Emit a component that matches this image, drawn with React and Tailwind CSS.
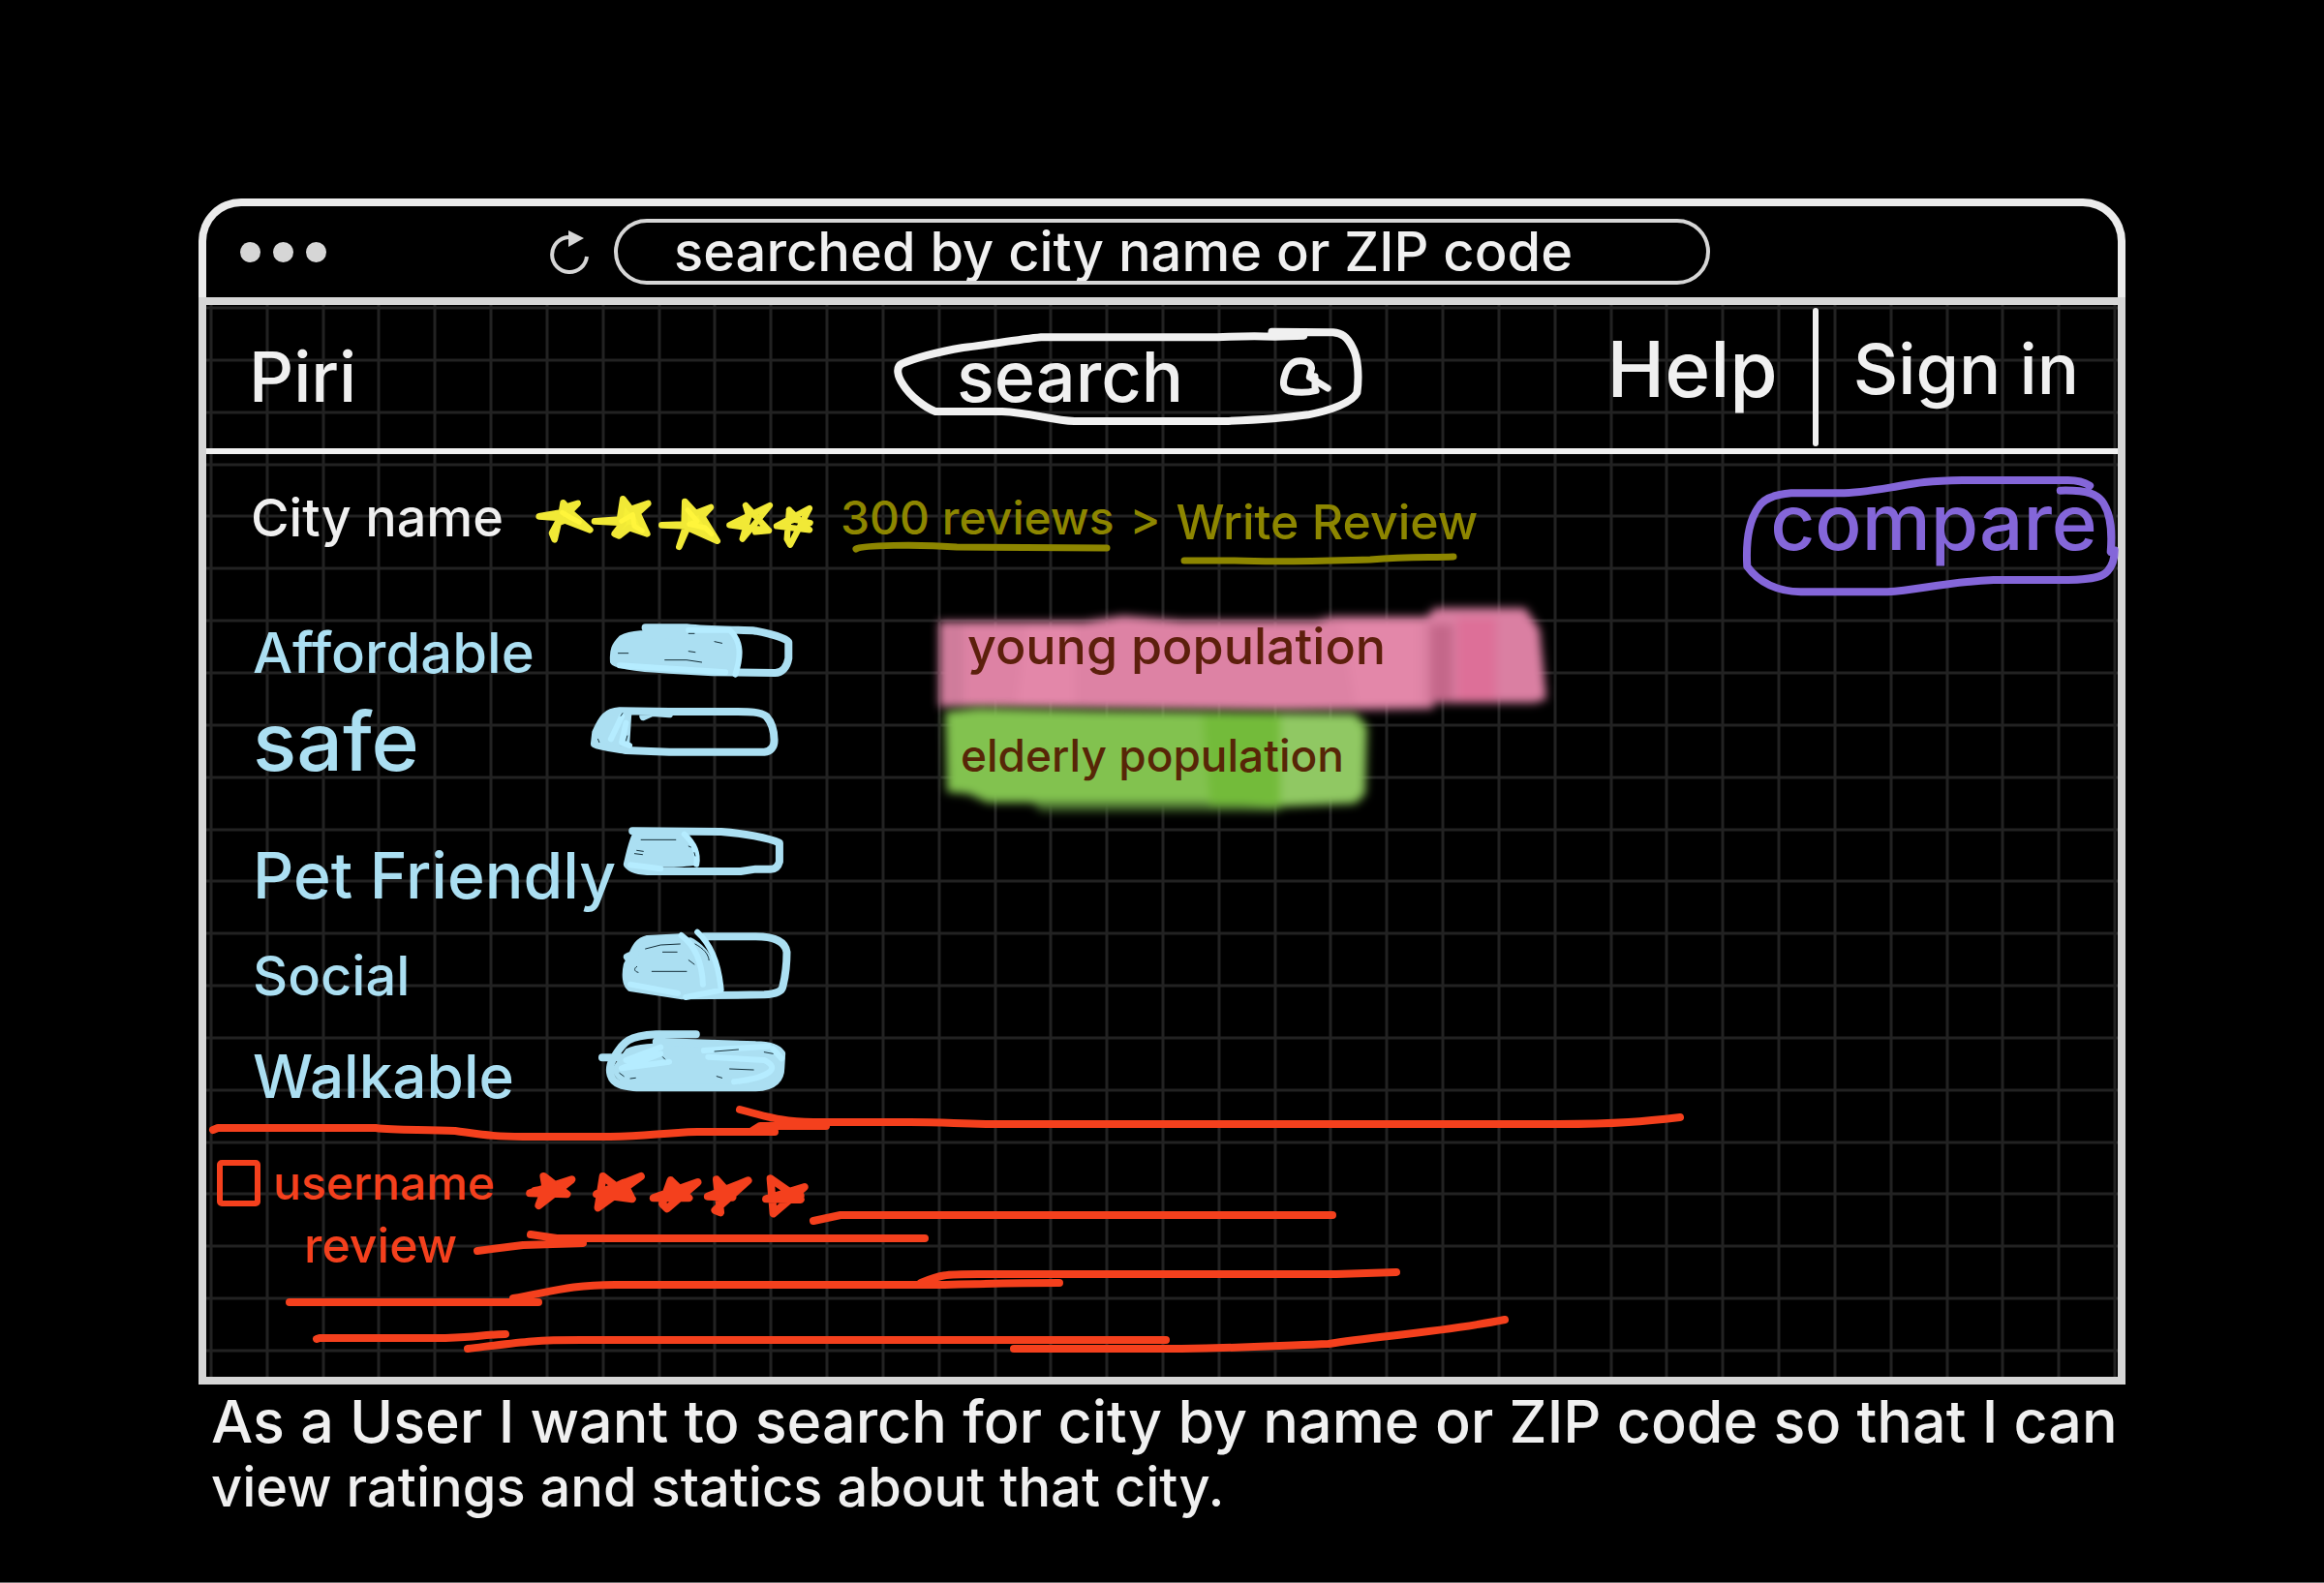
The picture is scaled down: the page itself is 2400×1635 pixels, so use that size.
const ICE = '#abdff2';
const ICE_LIGHT = '#b5ecff';
const RED = '#f4401d';

const columns = Array.from({ length: 35 }, (_, i) => 5 + Math.round((i * 1966) / 34));
const rows = Array.from({ length: 21 }, (_, i) => 3 + Math.round((i * 1077) / 20));

function Stroke({ d, color, width = 8, fill = 'none' }) {
  return (
    <path
      d={d}
      fill={fill}
      stroke={color}
      strokeWidth={width}
      strokeLinecap="round"
      strokeLinejoin="round"
      vectorEffect="non-scaling-stroke"
    />
  );
}

function GridLines() {
  return (
    <svg aria-hidden="true" viewBox="0 0 1974 1107" preserveAspectRatio="none" className="absolute inset-0 h-full w-full">
      {columns.map((x) => (
        <path key={x} d={`M${x} 0V1107`} stroke="#222222" strokeWidth="3" />
      ))}
      {rows.map((y) => (
        <path key={y} d={`M0 ${y}H1974`} stroke="#222222" strokeWidth="3" />
      ))}
    </svg>
  );
}

function TitleBar() {
  return (
    <header className="grid h-[102px] grid-cols-[354fr_67px_1132fr_421fr] items-center rounded-t-[44px] border-8 border-b-0 border-[#ebebeb]">
      <div className="flex gap-[13px] pl-[35px]">
        <span className="size-[21px] rounded-full bg-[#d6d6d6]" />
        <span className="size-[21px] rounded-full bg-[#d6d6d6]" />
        <span className="size-[21px] rounded-full bg-[#d6d6d6]" />
      </div>
      <button type="button" aria-label="Reload">
        <svg viewBox="567 236 45 48" className="h-12 w-[45px]">
          <path d="M587 245A18 18 0 1 0 606 265" fill="none" stroke="#d6d6d6" strokeWidth="4" />
          <path d="M587 238V255L603 246Z" fill="#d6d6d6" />
        </svg>
      </button>
      <input
        type="text"
        aria-label="Address"
        defaultValue="searched by city name or ZIP code"
        className="h-[68px] w-full rounded-full border-4 border-[#d6d6d6] pl-[58px] text-[56px] leading-[60px] font-medium text-[#f0f0f0]"
      />
    </header>
  );
}

function SiteHeader() {
  return (
    <div className="relative grid h-[148px] grid-cols-[663fr_490px_737fr] items-center pr-10 pl-11 text-[#f0f0f0]">
      <a href="#home" className="text-[72px] leading-20 font-medium">Piri</a>
      <form className="relative flex h-[110px] items-center pr-8 pl-[68px]">
        <svg aria-hidden="true" viewBox="70 435 853 330" preserveAspectRatio="none" className="absolute inset-0 h-full w-full">
          <Stroke
            color="#f0f0f0"
            d="M812 473L760 476C700 472 680 478 640 478L340 478C300 485 240 502 200 510C150 525 110 545 90 560C78 570 82 600 92 625C105 660 130 695 150 708L270 708C320 712 360 735 400 738L670 738C720 735 780 728 820 718C860 705 900 680 908 650C912 600 910 540 900 510C890 475 880 465 865 463L755 461"
          />
        </svg>
        <input
          type="text"
          aria-label="Search"
          placeholder="search"
          className="relative w-full min-w-0 flex-1 text-[72px] leading-20 font-medium placeholder:text-[#f0f0f0]"
        />
        <button type="submit" aria-label="Search" className="relative">
          <svg viewBox="760 525 105 135" preserveAspectRatio="none" className="h-[45px] w-[60px]">
            <Stroke
              color="#f0f0f0"
              width={7}
              d="M832 634C815 642 795 640 784 636C770 630 772 605 776 585C780 558 790 545 798 543C815 540 823 548 824 565L820 592M830 590L830 632M822 594L853 627"
            />
          </svg>
        </button>
      </form>
      <nav className="flex items-center justify-end gap-9 font-medium">
        <a href="#help" className="pb-4 text-[80px] leading-20">Help</a>
        <span className="h-[143px] w-[6px] rounded-full bg-[#f0f0f0]" />
        <a href="#sign-in" className="pb-4 text-[72px] leading-20">Sign in</a>
      </nav>
    </div>
  );
}

const cityStars = [
  'M50 130L120 118L125 88L135 100L170 90L145 115L208 172L130 142L110 150L98 202L90 182L115 135Z',
  'M222 145L300 140L310 76L335 108L388 90L355 120L385 184L330 165L298 190L284 184L310 150Z',
  'M430 157L500 155L502 84L535 120L582 102L555 130L602 206L510 165L484 224L505 160Z',
];

function CityStars() {
  return (
    <svg role="img" aria-label="Rating" viewBox="0 0 960 270" className="h-[90px] w-[320px] shrink-0">
      {cityStars.map((d) => (
        <path key={d} d={d} fill="#f6ef37" stroke="#f1e936" strokeWidth="20" strokeLinejoin="round" />
      ))}
      <g fill="none" stroke="#fff53b" strokeWidth="15" strokeLinecap="round" strokeLinejoin="round">
        <path d="M122 118L150 135L175 148M305 145L340 125L345 160L370 175M510 110L540 145L515 155L565 165L585 185" />
      </g>
      <g fill="none" stroke="#f1e936" strokeWidth="19" strokeLinecap="round" strokeLinejoin="round">
        <path d="M690 96L762 174L640 157L765 96L680 200L700 130L690 96M640 157L690 145M720 178L762 174" />
        <path d="M825 110L888 172L786 160L888 105L828 218L818 200L825 110M786 160L840 140L890 150" />
      </g>
    </svg>
  );
}

function CityRow() {
  return (
    <div className="flex h-[153px] items-start pl-[46px] font-medium">
      <div className="flex h-[132px] items-center">
        <h1 className="w-[281px] text-[54px] leading-[60px] whitespace-nowrap text-[#f0f0f0]">City name</h1>
        <CityStars />
        <div className="ml-2 flex items-center gap-4 text-[48px] leading-[60px] whitespace-nowrap text-[#8d8600]">
          <a href="#reviews" className="relative">
            300 reviews
            <svg aria-hidden="true" viewBox="0 0 280 12" className="absolute top-full left-0 h-3 w-[280px] overflow-visible">
              <Stroke color="#8d8600" width={7} d="M16 2C22 -2 80 -3 120 0L275 1" />
            </svg>
          </a>
          <span>&gt;</span>
          <a href="#write" className="relative pt-2 text-[50px]">
            Write Review
            <svg aria-hidden="true" viewBox="0 0 300 20" className="absolute top-full left-0 h-5 w-[300px] overflow-visible">
              <Stroke color="#8d8600" width={7} d="M8 10L60 10C110 12 160 10 200 9C240 6 260 7 286 6" />
            </svg>
          </a>
        </div>
      </div>
      <button
        type="button"
        className="relative mt-[21px] ml-auto h-[145px] w-[388px] pb-12 pl-2 text-center text-[80px] leading-20 text-[#8466d9]"
      >
        <svg aria-hidden="true" viewBox="490 900 956 435" preserveAspectRatio="none" className="absolute inset-0 h-full w-full overflow-visible">
          <Stroke
            color="#8466d9"
            d="M1375 935C1355 920 1340 918 1320 918L1050 918C950 920 920 930 870 940C810 952 770 958 740 958L615 958C570 962 540 980 530 1005C505 1050 500 1120 503 1185C530 1230 570 1262 640 1264L860 1264C940 1258 1000 1235 1130 1227L1320 1227C1390 1225 1410 1215 1420 1200C1435 1180 1438 1160 1438 1135L1428 1140C1432 1080 1430 1030 1410 990C1395 960 1370 948 1300 950"
          />
        </svg>
        compare
      </button>
    </div>
  );
}

const ratings = [
  {
    label: 'Affordable',
    value: 70,
    style: 'self-center text-[58px] leading-[60px]',
    box: '907 66 493 312',
    outline:
      'M1045 145L1140 145C1200 155 1270 150 1300 155C1340 165 1375 180 1376 190L1376 240C1372 270 1360 285 1345 285L1200 283L1100 275C1020 270 975 260 972 250C970 215 975 200 990 180C1010 165 1040 160 1125 170',
    fill: 'M985 180C1020 160 1080 152 1150 152L1240 152C1270 180 1272 240 1255 290L1100 277C1020 270 975 260 972 250Z',
    shade: 'M1145 152L1240 152C1270 190 1265 240 1253 290M985 262L1230 283',
    nicks: 'M982 224L1005 224M1090 245L1140 245L1175 252M1145 218L1160 221M1205 188L1222 193M1145 163L1158 163',
  },
  {
    label: 'safe',
    value: 20,
    style: 'self-start text-[84px] leading-20',
    box: '907 378 493 312',
    outline:
      'M1040 420L1060 408L1100 412M1100 405L985 403C955 405 945 425 930 470L927 505C940 515 980 520 1000 525L1100 530L1320 530C1335 528 1343 515 1343 495C1343 470 1338 440 1325 420C1310 405 1290 405 1240 405L1080 405',
    fill: 'M975 405L1013 410L1008 515L930 505C935 460 950 415 975 405Z',
    shade: 'M990 420L965 490M1000 440L990 500L1008 510',
    nicks: 'M935 490L938 500M992 410L988 418M1003 480L1000 495',
  },
  {
    label: 'Pet Friendly',
    value: 45,
    style: 'self-end text-[66px] leading-[60px]',
    box: '907 -30 493 312',
    outline:
      'M1015 55L1220 57C1270 62 1330 75 1355 92L1355 150C1352 165 1345 173 1335 173L1300 173L1265 180L1060 180C1030 180 1010 170 1003 158C1010 120 1012 100 1022 70',
    fill: 'M1025 65L1135 65C1155 90 1170 120 1165 160C1120 172 1040 168 1008 160Z',
    shade: 'M1135 65C1155 90 1168 120 1163 158M1010 160L1080 172',
    nicks: 'M1035 82L1115 82M1025 115L1040 118M1020 125L1038 128M1145 102L1150 105M1158 122L1160 132',
  },
  {
    label: 'Social',
    value: 55,
    style: 'self-end text-[56px] leading-[60px]',
    box: '907 282 493 312',
    outline:
      'M1003 445L1020 435M1125 385L1050 390C1020 400 1020 430 1003 470C998 500 1000 530 1010 540L1130 565L1320 562C1350 560 1360 550 1362 540C1368 510 1372 480 1372 430C1368 395 1340 382 1300 382L1180 382',
    fill: 'M1040 395L1150 385C1190 410 1215 470 1220 550L1135 572C1060 560 1015 548 1003 530C1000 480 1015 410 1040 395Z',
    shade: 'M1128 378C1150 400 1175 440 1178 530M1165 368C1200 410 1215 470 1220 548L1138 570M1010 530L1120 558',
    nicks: 'M1045 420L1080 408L1125 405M1085 430L1118 430M1060 490L1140 490M1025 475C1018 480 1018 490 1028 493M1160 405C1180 420 1190 435 1192 455M1145 455L1158 468',
  },
  {
    label: 'Walkable',
    value: 100,
    style: 'self-end text-[62px] leading-[60px]',
    box: '907 594 493 312',
    outline:
      'M1162 685L1070 685C1000 690 995 710 970 760C955 800 965 830 985 840C1000 850 1030 850 1060 850L1300 850C1345 848 1358 820 1358 790L1360 745C1350 725 1330 718 1300 718L1070 708M945 757L1000 757',
    fill: 'M1000 730C1030 710 1080 712 1150 712L1330 722L1358 750L1358 800C1350 840 1320 848 1290 850L1040 850C990 845 970 820 968 790Z',
    shade: 'M1080 725L1000 765L1080 745L990 790L1100 770M1180 735L1330 722M1190 755L1320 765C1360 790 1330 820 1250 832M1340 730L1360 760',
    nicks: 'M985 805L995 815M1010 822L1022 820M1085 755L1090 762M1240 792L1295 795M1205 738L1260 732M1320 740L1340 745M1210 815L1222 820',
  },
];

function RatingList() {
  return (
    <ul className="w-[710px] shrink-0 pl-11">
      {ratings.map((r) => (
        <li key={r.label} className="flex h-26">
          <span className={`w-[348px] shrink-0 pl-1 font-medium whitespace-nowrap text-[#abdff2] ${r.style}`}>{r.label}</span>
          <svg
            role="meter"
            aria-label={r.label}
            aria-valuenow={r.value}
            aria-valuemin={0}
            aria-valuemax={100}
            viewBox={r.box}
            preserveAspectRatio="none"
            className="h-26 w-[220px] shrink-0 overflow-visible"
          >
            <path d={r.fill} fill={ICE} />
            <Stroke color={ICE} d={r.outline} />
            <Stroke color={ICE_LIGHT} width={6} d={r.shade} />
            <Stroke color="#16303a" width={1} d={r.nicks} />
          </svg>
        </li>
      ))}
    </ul>
  );
}

function Populations() {
  return (
    <ul className="font-medium whitespace-nowrap">
      <li className="relative h-26 w-[640px] pt-4 pl-[37px] text-[52px] leading-[60px] text-[#5c1f0c]">
        <svg aria-hidden="true" viewBox="962 622 640 104" className="absolute inset-0 h-full w-full overflow-visible">
          <g className="blur-[5px]">
            <path d="M970 642H1120L1160 636L1220 641H1360L1375 637H1480V732L1330 734L970 730Z" fill="#dd82a4" />
            <path d="M975 645H995V728H975Z" fill="#cf7c9b" />
            <path d="M1060 645H1110V728H1050ZM1385 642H1465V728H1400Z" fill="#e387a9" />
            <path d="M1472 638L1482 628H1575L1590 650L1597 722L1585 726H1472Z" fill="#da7fa2" />
            <path d="M1477 645H1500V724H1477Z" fill="#c4678a" />
            <path d="M1505 638H1545V724H1505Z" fill="#dd6f98" />
          </g>
        </svg>
        <span className="relative">young population</span>
      </li>
      <li className="relative h-26 w-[640px] pt-6 pl-[30px] text-[46px] leading-[60px] text-[#572607]">
        <svg aria-hidden="true" viewBox="962 726 640 104" className="absolute inset-0 h-full w-full overflow-visible">
          <g className="blur-[5px]">
            <path d="M1062 826H1322V838H1075Z" fill="#456a2d" />
            <path d="M976 735L1010 731L1130 734L1400 737L1412 750L1410 820L1400 830L1310 834L1240 829H1020L1000 820L978 818Z" fill="#82c24f" />
            <path d="M1322 738H1398L1408 755V820L1395 828L1322 830Z" fill="#90c863" />
            <path d="M1242 738H1322V832H1250Z" fill="#73bb3a" />
          </g>
        </svg>
        <span className="relative">elderly population</span>
      </li>
    </ul>
  );
}

const reviewStars = [
  'M708 285L755 340L680 337L765 295L698 375L712 320ZM690 330L735 318',
  'M828 285L887 355L815 340L905 285L818 382ZM835 330L870 305L885 350',
  'M965 297L1002 352L930 352L1020 303L958 385L948 370ZM975 340L1010 312',
  'M1058 295L1090 350L1040 347L1122 298L1055 390L1066 397ZM1085 320L1112 305',
  'M1167 292L1228 357L1158 355L1236 318L1173 400ZM1190 345L1228 345',
];

function Reviews() {
  return (
    <section className="font-medium text-[#f4401d]">
      <svg aria-hidden="true" className="block h-10 w-full overflow-visible">
        <g transform="translate(-213 -1142)">
          <Stroke color={RED} d="M220 1167L225 1165H388C410 1168 440 1166 470 1168C500 1172 510 1174 540 1174H630C670 1174 680 1170 720 1169H800" />
          <Stroke color={RED} d="M777 1168L785 1163H853M764 1146C800 1156 815 1159 840 1159H940C980 1159 990 1161 1030 1161H1610C1670 1161 1700 1158 1735 1154" />
        </g>
      </svg>
      <div className="flex h-20 items-center pl-[11px]">
        <input
          id="user"
          type="checkbox"
          className="h-12 w-[45px] shrink-0 appearance-none rounded-[5px] border-[6px] border-[#f4401d]"
        />
        <label htmlFor="user" className="w-[271px] pl-[13px] text-[48px] leading-[60px]">username</label>
        <svg role="img" aria-label="User rating" viewBox="666 186 588 240" preserveAspectRatio="none" className="h-20 w-[300px] overflow-visible">
          {reviewStars.map((d) => (
            <Stroke key={d} color={RED} d={d} />
          ))}
        </svg>
      </div>
      <div className="flex h-14 items-center pl-[101px]">
        <p className="w-[170px] pb-2 text-[50px] leading-[60px]">review</p>
        <svg aria-hidden="true" className="h-14 flex-1 overflow-visible">
          <g transform="translate(-484 -1262)">
            <Stroke color={RED} d="M840 1261L868 1255H1376M548 1275L575 1279H955M493 1292L540 1286L602 1284" />
          </g>
        </svg>
      </div>
      <svg aria-hidden="true" className="block h-20 w-full overflow-visible">
        <g transform="translate(-213 -1318)">
          <Stroke color={RED} d="M299 1345H556M530 1341C570 1334 590 1327 635 1327H950C1000 1327 1020 1325 1094 1325" />
          <Stroke color={RED} d="M951 1325C970 1317 975 1316 1010 1316H1380L1442 1314" />
          <Stroke color={RED} d="M327 1383L330 1382H460C500 1381 490 1379 522 1378M483 1393C540 1386 550 1384 600 1384H1204" />
          <Stroke color={RED} d="M1047 1393H1220C1290 1392 1320 1390 1372 1388C1420 1380 1490 1376 1554 1363" />
        </g>
      </svg>
    </section>
  );
}

export default function App() {
  return (
    <main className="flex min-h-screen flex-col border-b border-[#6c6c6c] bg-black px-[205px] pt-[205px] font-['Inter',sans-serif]">
      <TitleBar />
      <div className="relative border-8 border-[#d6d6d6]">
        <GridLines />
        <SiteHeader />
        <div className="relative h-[6px] bg-[#f0f0f0]" />
        <div className="relative pb-6">
          <CityRow />
          <div className="flex gap-[39px]">
            <RatingList />
            <Populations />
          </div>
          <Reviews />
        </div>
      </div>
      <p className="pt-1 pl-[13px] font-medium whitespace-nowrap text-[#f0f0f0]">
        <span className="block text-[61px] leading-[68px]">
          As a User I want to search for city by name or ZIP code so that I can
        </span>
        <span className="block text-[56px] leading-[68px]">view ratings and statics about that city.</span>
      </p>
    </main>
  );
}
